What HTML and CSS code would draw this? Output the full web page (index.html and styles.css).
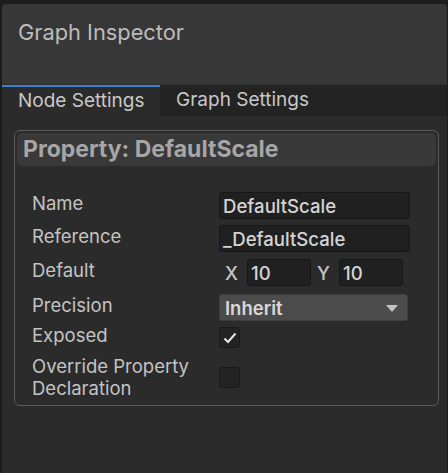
FILE: index.html
```html
<!DOCTYPE html>
<html>
<head>
<meta charset="utf-8">
<link rel="stylesheet" href="styles.css">
</head>
<body>
<div class="window">
  <div class="header">Graph Inspector</div>
  <div class="tabs">
    <div class="tab active">Node Settings</div>
    <div class="tab">Graph Settings</div>
  </div>
  <div class="content">
    <div class="card">
      <div class="card-title">Property: DefaultScale</div>
      <div class="rows">
        <div class="row">
          <div class="label">Name</div>
          <div class="field"><div class="input">DefaultScale</div></div>
        </div>
        <div class="row">
          <div class="label">Reference</div>
          <div class="field"><div class="input">_DefaultScale</div></div>
        </div>
        <div class="row r-default">
          <div class="label">Default</div>
          <div class="field vec">
            <span class="axis">X</span><div class="input small">10</div>
            <span class="axis">Y</span><div class="input small">10</div>
          </div>
        </div>
        <div class="row r-precision">
          <div class="label">Precision</div>
          <div class="field"><div class="dropdown"><span>Inherit</span><span class="arrow"></span></div></div>
        </div>
        <div class="row r-exposed">
          <div class="label">Exposed</div>
          <div class="field"><div class="check">
            <svg width="14" height="12" viewBox="0 0 14 12"><path d="M1.5 6.5 L5 10 L12.5 1.5" fill="none" stroke="#e6e6e6" stroke-width="2"/></svg>
          </div></div>
        </div>
        <div class="row tall">
          <div class="label">Override Property<br>Declaration</div>
          <div class="field"><div class="check"></div></div>
        </div>
      </div>
    </div>
  </div>
</div>
</body>
</html>
```
FILE: styles.css
```css
* { box-sizing: border-box; }
html, body { margin: 0; padding: 0; }
body {
  background: #1d1d1d;
  width: 448px;
  height: 473px;
  overflow: hidden;
  font-family: Inter, "Noto Sans", sans-serif;
  padding: 4px 1px 0 2px;
}
.window {
  height: 469px;
  background: #2b2b2b;
  border-radius: 4px 4px 0 0;
  overflow: hidden;
  display: flex;
  flex-direction: column;
}
.header {
  height: 81px;
  background: #373737;
  color: #bcbcbc;
  font-size: 21.8px;
  padding: 15px 0 0 16px;
  border-bottom: 1px solid #2f2f2f;
}
.tabs {
  display: flex;
  background: #232323;
  height: 31px;
}
.tab {
  font-size: 19px;
  color: #c8c8c8;
  padding: 3px 16px 0 16px;
  white-space: nowrap;
}
.tab.active {
  background: #2b2b2b;
  border-top: 2px solid #3d7fce;
  padding: 2px 0 0 16px;
  width: 158px;
}
.content {
  flex: 1;
  padding: 14px 8px 0 12px;
}
.card {
  border: 1px solid #5a5a5a;
  border-radius: 6px;
  padding: 2px 2px 6px 2px;
  height: 276px;
}
.card-title {
  background: #393939;
  border-radius: 5px;
  height: 33px;
  color: #a6a6a6;
  font-weight: 700;
  font-size: 23px;
  line-height: 28px;
  padding: 2px 0 0 6px;
  white-space: nowrap;
}
.rows {
  padding: 23px 0 0 15px;
  display: flex;
  flex-direction: column;
}
.row {
  display: flex;
  align-items: center;
  height: 33px;
}
.r-default { margin-top: 1px; }
.r-precision { margin-top: 2px; }
.r-exposed { margin-top: -3px; }
.row.tall { height: 46px; }
.label {
  width: 187px;
  color: #c4c4c4;
  font-size: 18.5px;
  line-height: 22px;
  margin-top: -5px;
  white-space: nowrap;
}
.row.tall .label { margin-top: 0; }
.field { display: flex; align-items: center; }
.input {
  width: 191px;
  height: 27px;
  background: #202020;
  border: 1px solid #171717;
  border-radius: 3px;
  color: #d4d4d4;
  font-size: 18.6px;
  font-weight: 500;
  line-height: 22px;
  padding: 2px 0 0 3px;
}
.vec { padding-left: 6px; }
.axis {
  color: #c4c4c4;
  font-size: 18.5px;
  font-weight: 500;
  width: 22px;
}
.input.small {
  width: 64px;
  margin-right: 6px;
}
.dropdown {
  width: 189px;
  height: 27px;
  background: #4b4b4b;
  border: 1px solid #3e3e3e;
  border-radius: 3px;
  color: #d8d8d8;
  font-size: 18.5px;
  font-weight: 600;
  line-height: 22px;
  padding: 2px 0 0 5px;
  display: flex;
  justify-content: space-between;
}
.arrow {
  width: 0; height: 0;
  border-left: 6px solid transparent;
  border-right: 6px solid transparent;
  border-top: 7px solid #c4c4c4;
  margin: 8px 9px 0 0;
}
.check {
  width: 21px;
  height: 21px;
  background: #232323;
  border: 1px solid #1a1a1a;
  border-radius: 3px;
  display: flex;
  align-items: center;
  justify-content: center;
}
```
